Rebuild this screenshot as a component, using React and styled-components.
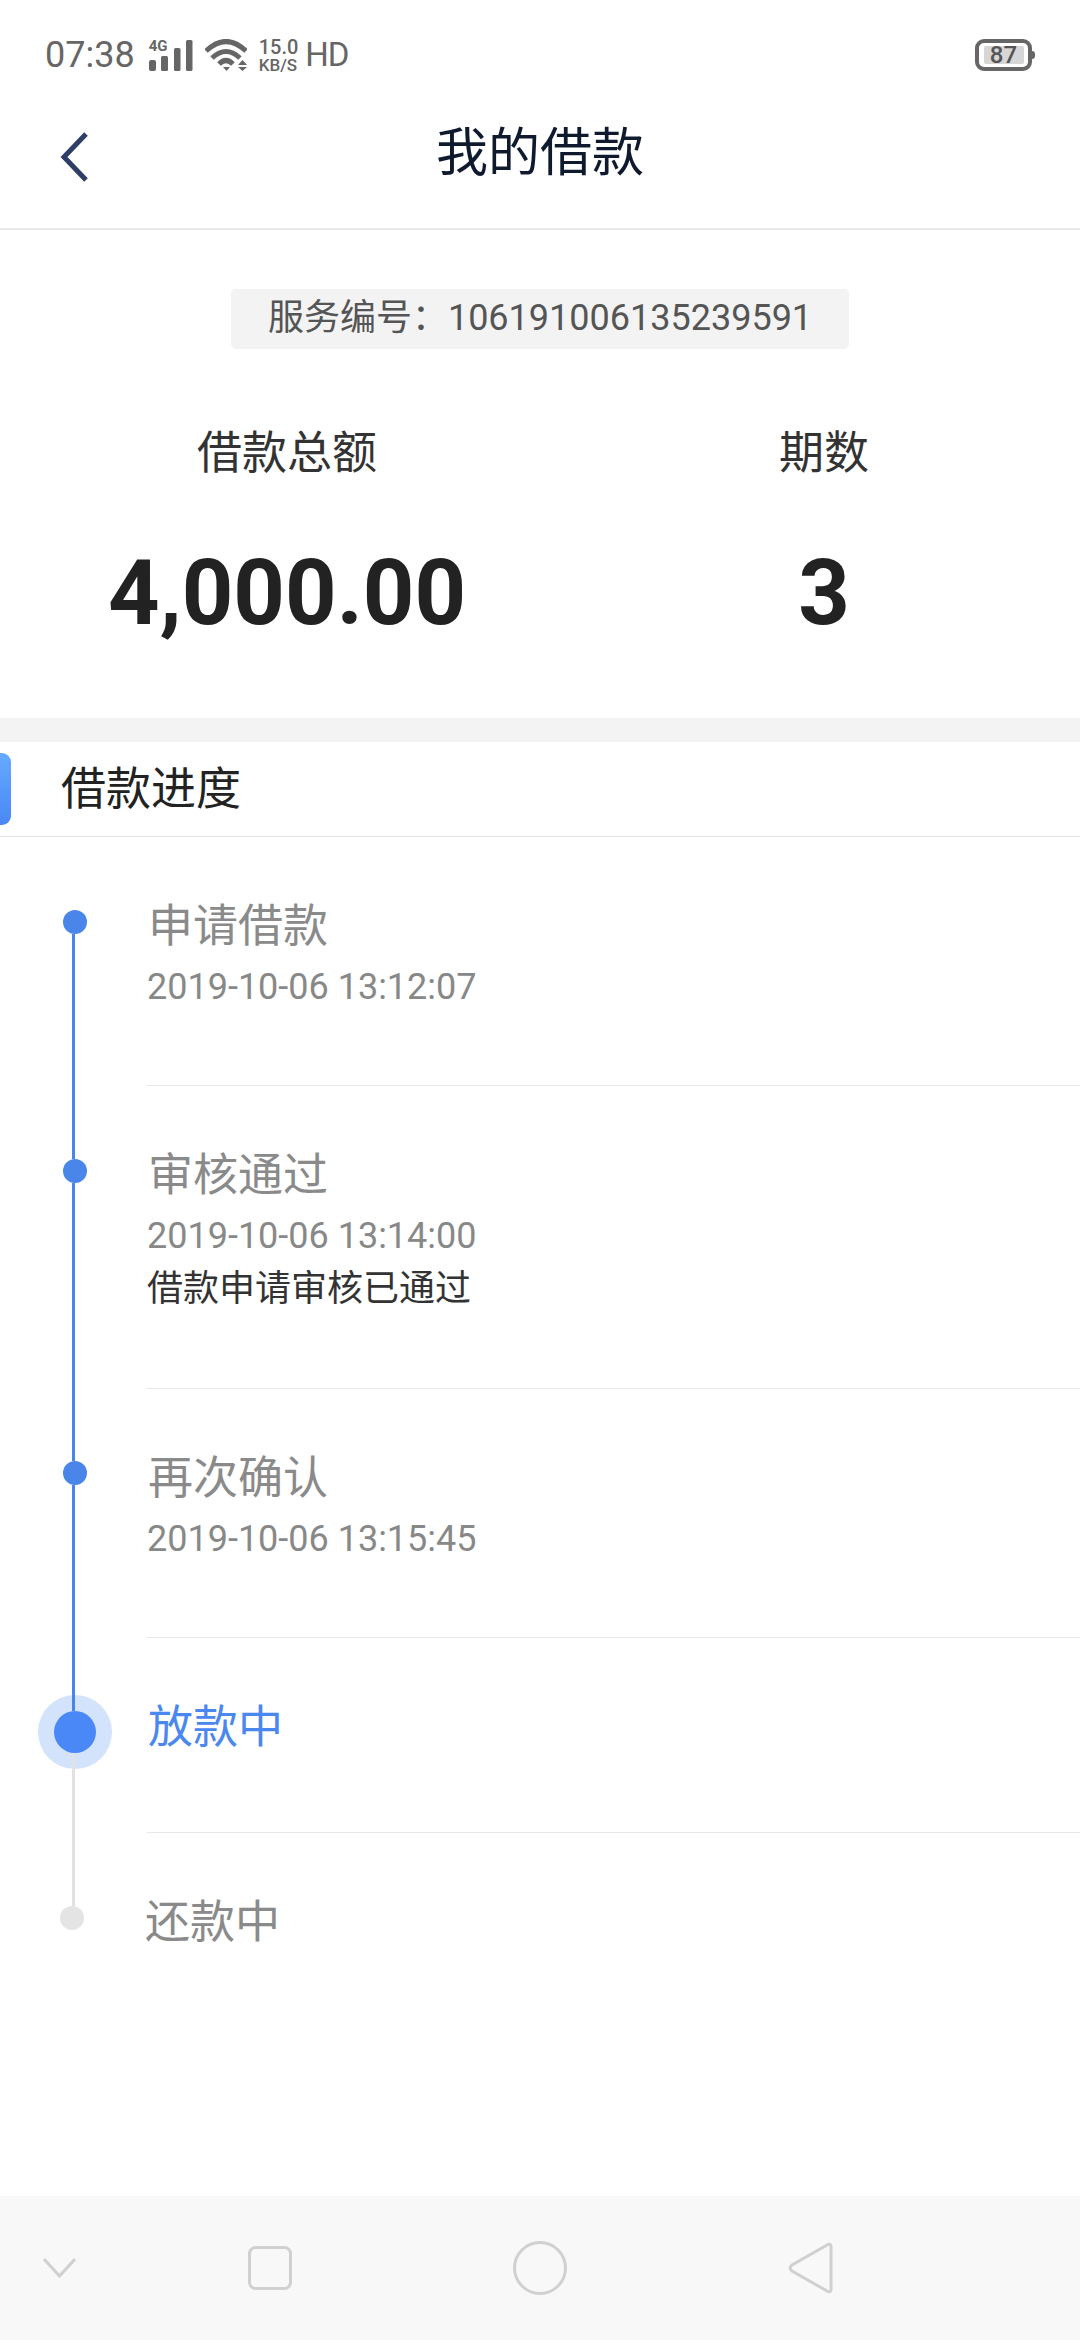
import React from 'react'
import styled, { createGlobalStyle } from 'styled-components'

const GlobalStyle = createGlobalStyle`
html, body {
  margin: 0;
  padding: 0;
  background: #fff;
}
* {
  box-sizing: border-box;
}
`

const BLUE = '#4a86ea'
const GREY_LINE = '#e2e2e2'

const Page = styled.div`
width: 1080px;
height: 2340px;
display: flex;
flex-direction: column;
background: #fff;
overflow: hidden;
font-family: Roboto, "Noto Sans CJK SC", sans-serif;
`

const StatusBar = styled.div`
height: 80px;
padding: 30px 45px 0 45px;
display: flex;
align-items: center;
color: #666;
`

const Clock = styled.span`
font-size: 36px;
line-height: 50px;
`

const Signal = styled.div`
position: relative;
display: flex;
margin-left: 14px;
`

const SignalTag = styled.span`
position: absolute;
left: 0;
top: -1px;
font-size: 15px;
line-height: 15px;
font-weight: 700;
`

const Wifi = styled.svg`
display: block;
margin-left: 12px;
`

const Speed = styled.div`
margin-left: 12px;
display: flex;
flex-direction: column;
`

const SpeedValue = styled.span`
font-size: 20px;
line-height: 19px;
font-weight: 500;
`

const SpeedUnit = styled.span`
font-size: 17px;
line-height: 16px;
font-weight: 500;
`

const Hd = styled.span`
margin-left: 7px;
font-size: 33px;
line-height: 50px;
letter-spacing: -1px;
`

const Battery = styled.div`
position: relative;
margin-left: auto;
margin-right: 3px;
width: 57px;
height: 32px;
border: 4px solid #666;
border-radius: 9px;
display: flex;
align-items: center;
justify-content: center;
&::after {
  content: "";
  position: absolute;
  right: -7px;
  top: 8px;
  width: 3px;
  height: 8px;
  background: #666;
  border-radius: 0 3px 3px 0;
}
`

const BatteryFill = styled.span`
width: 40px;
height: 18px;
border-radius: 2px;
background: #d6d6d6;
color: #555;
font-size: 24px;
line-height: 18px;
font-weight: 500;
text-align: center;
`

const Header = styled.header`
height: 150px;
display: grid;
grid-template-columns: 1fr auto 1fr;
align-items: center;
border-bottom: 2px solid #e8e8e8;
`

const BackIcon = styled.svg`
display: block;
margin: 5px 0 0 59px;
`

const Title = styled.h1`
margin: 0;
font-size: 52px;
line-height: 60px;
font-weight: 400;
color: #101a2e;
`

const Summary = styled.section`
padding: 59px 0 70px;
display: flex;
flex-direction: column;
align-items: center;
`

const ServiceNo = styled.div`
width: 618px;
height: 60px;
padding-bottom: 10px;
display: flex;
align-items: center;
justify-content: center;
background: #f3f3f3;
border-radius: 5px;
font-size: 36px;
color: #555;
`

const Stats = styled.div`
margin-top: 75px;
width: 100%;
display: grid;
grid-template-columns: 574px 500px;
`

const Stat = styled.div`
display: flex;
flex-direction: column;
align-items: center;
`

const StatLabel = styled.div`
font-size: 45px;
line-height: 60px;
color: #333;
`

const StatValue = styled.div`
margin-top: 56px;
font-size: 90px;
line-height: 108px;
font-weight: 700;
color: #222;
`

const Band = styled.div`
height: 24px;
background: #f3f3f3;
`

const SectionHead = styled.div`
height: 95px;
display: flex;
align-items: center;
gap: 50px;
border-bottom: 1px solid #e2e2e2;
`

const SectionTab = styled.span`
width: 11px;
height: 72px;
border-radius: 0 9px 9px 0;
background: linear-gradient(180deg, #66aaff, #4a87f5);
`

const SectionTitle = styled.div`
padding-top: 2px;
font-size: 45px;
line-height: 60px;
color: #222;
`

const Step = styled.div`
display: flex;
`

const Rail = styled.div`
flex: 0 0 147px;
display: flex;
flex-direction: column;
`

const Stub = styled.span`
display: block;
width: 3px;
margin-left: 72px;
height: ${p => p.$height}px;
background: ${p => p.$color};
`

const RailLine = styled.span`
display: block;
flex: 1;
width: 3px;
margin-left: 72px;
background: ${p => p.$color};
`

const Dot = styled.span`
display: block;
width: 24px;
height: 24px;
border-radius: 50%;
margin-left: ${p => p.$left}px;
background: ${p => p.$color};
`

const Halo = styled.span`
position: relative;
width: 74px;
height: 74px;
margin-left: 38px;
border-radius: 50%;
background: #d3e3fb;
display: flex;
align-items: center;
justify-content: center;
&::before, &::after {
  content: "";
  position: absolute;
  left: 34px;
  width: 3px;
  height: 16px;
}
&::before {
  top: 0;
  background: ${BLUE};
}
&::after {
  bottom: 0;
  background: ${GREY_LINE};
}
`

const HaloCore = styled.span`
width: 42px;
height: 42px;
border-radius: 50%;
background: #4a87f7;
`

const StepBody = styled.div`
flex: 1;
padding: 61px 0 75px;
border-bottom: ${p => (p.$last ? 'none' : '1px solid #e8e8e8')};
`

const StepTitle = styled.div`
font-size: 45px;
line-height: 58px;
color: ${p => (p.$active ? '#4a87ef' : '#8a8a8a')};
margin-left: ${p => (p.$last ? '-2px' : '1px')};
`

const StepDate = styled.div`
margin: 9px 0 1px;
font-size: 36px;
line-height: 44px;
color: #888;
`

const StepNote = styled.div`
margin: 9px 0 2px;
font-size: 36px;
line-height: 44px;
color: #333;
`

const NavBar = styled.nav`
margin-top: auto;
height: 144px;
padding-left: 43px;
display: flex;
align-items: center;
background: #f8f8f8;
`

const NavIcon = styled.svg`
display: block;
margin-left: ${p => p.$gap || 0}px;
fill: none;
stroke: #d0d0d0;
stroke-width: 3;
`

const steps = [
  { title: '申请借款', date: '2019-10-06 13:12:07', stubColor: 'transparent', lineColor: BLUE, stub: 73 },
  { title: '审核通过', date: '2019-10-06 13:14:00', note: '借款申请审核已通过', stubColor: BLUE, lineColor: BLUE, stub: 73 },
  { title: '再次确认', date: '2019-10-06 13:15:45', stubColor: BLUE, lineColor: BLUE, stub: 72 },
  { title: '放款中', active: true, stubColor: BLUE, lineColor: GREY_LINE, stub: 57 },
  { title: '还款中', last: true, stubColor: GREY_LINE, stub: 73 },
]

const SignalBars = () => (
  <Signal>
    <svg width="44" height="31" viewBox="0 0 44 31" fill="#666">
      <rect x="0" y="20" width="7" height="11" rx="2" />
      <rect x="12" y="16" width="7" height="15" rx="1.5" />
      <rect x="25" y="8" width="6.5" height="23" rx="1.5" />
      <rect x="37" y="0" width="6.5" height="31" rx="1.5" />
    </svg>
    <SignalTag>4G</SignalTag>
  </Signal>
)

const WifiIcon = () => (
  <Wifi width="42" height="32" viewBox="0 0 42 32" fill="none" stroke="#666" strokeWidth="5">
    <path d="M1 12Q21-7 41 12" />
    <path d="M7 19Q21 6 35 19" />
    <path d="M14 25Q21 18 28 25" />
    <path d="M18 28h7l-3.5 4z" fill="#666" stroke="none" />
    <path d="M33 26l4.500-5 4.500 5zM33 28h9l-4.500 4z" fill="#666" stroke="none" />
  </Wifi>
)

const App = () => {
  return (
    <Page>
      <GlobalStyle />
      <StatusBar>
        <Clock>07:38</Clock>
        <SignalBars />
        <WifiIcon />
        <Speed>
          <SpeedValue>15.0</SpeedValue>
          <SpeedUnit>KB/S</SpeedUnit>
        </Speed>
        <Hd>HD</Hd>
        <Battery>
          <BatteryFill>87</BatteryFill>
        </Battery>
      </StatusBar>

      <Header>
        <BackIcon width="32" height="50" viewBox="0 0 32 50" fill="none" stroke="#2f3e66" strokeWidth="5">
          <path d="M27 2L5 25l22 23" />
        </BackIcon>
        <Title>我的借款</Title>
      </Header>

      <Summary>
        <ServiceNo>服务编号：106191006135239591</ServiceNo>
        <Stats>
          <Stat>
            <StatLabel>借款总额</StatLabel>
            <StatValue>4,000.00</StatValue>
          </Stat>
          <Stat>
            <StatLabel>期数</StatLabel>
            <StatValue>3</StatValue>
          </Stat>
        </Stats>
      </Summary>

      <Band />

      <SectionHead>
        <SectionTab />
        <SectionTitle>借款进度</SectionTitle>
      </SectionHead>

      {steps.map(step => (
        <Step key={step.title}>
          <Rail>
            <Stub $height={step.stub} $color={step.stubColor} />
            {step.active ? (
              <Halo><HaloCore /></Halo>
            ) : (
              <Dot $left={step.last ? 60 : 63} $color={step.last ? '#e4e4e4' : BLUE} />
            )}
            {!step.last && <RailLine $color={step.lineColor} />}
          </Rail>
          <StepBody $last={step.last}>
            <StepTitle $active={step.active} $last={step.last}>{step.title}</StepTitle>
            {step.date && <StepDate>{step.date}</StepDate>}
            {step.note && <StepNote>{step.note}</StepNote>}
          </StepBody>
        </Step>
      ))}

      <NavBar>
        <NavIcon width="33" height="20" viewBox="0 0 33 20">
          <path d="M1 1l15.500 17L32 1" />
        </NavIcon>
        <NavIcon $gap={172} width="44" height="44" viewBox="0 0 44 44">
          <rect x="1.500" y="1.500" width="41" height="41" rx="6" />
        </NavIcon>
        <NavIcon $gap={221} width="54" height="54" viewBox="0 0 54 54">
          <circle cx="27" cy="27" r="25.500" />
        </NavIcon>
        <NavIcon $gap={221} width="45" height="52" viewBox="0 0 45 52">
          <path d="M43 4.500v43c0 2.500-2.500 3-4 1.500L4 29c-2.500-2-2.500-4 0-6L39 3c1.500-1.500 4-1 4 1.500z" />
        </NavIcon>
      </NavBar>
    </Page>
  )
}

export default App
